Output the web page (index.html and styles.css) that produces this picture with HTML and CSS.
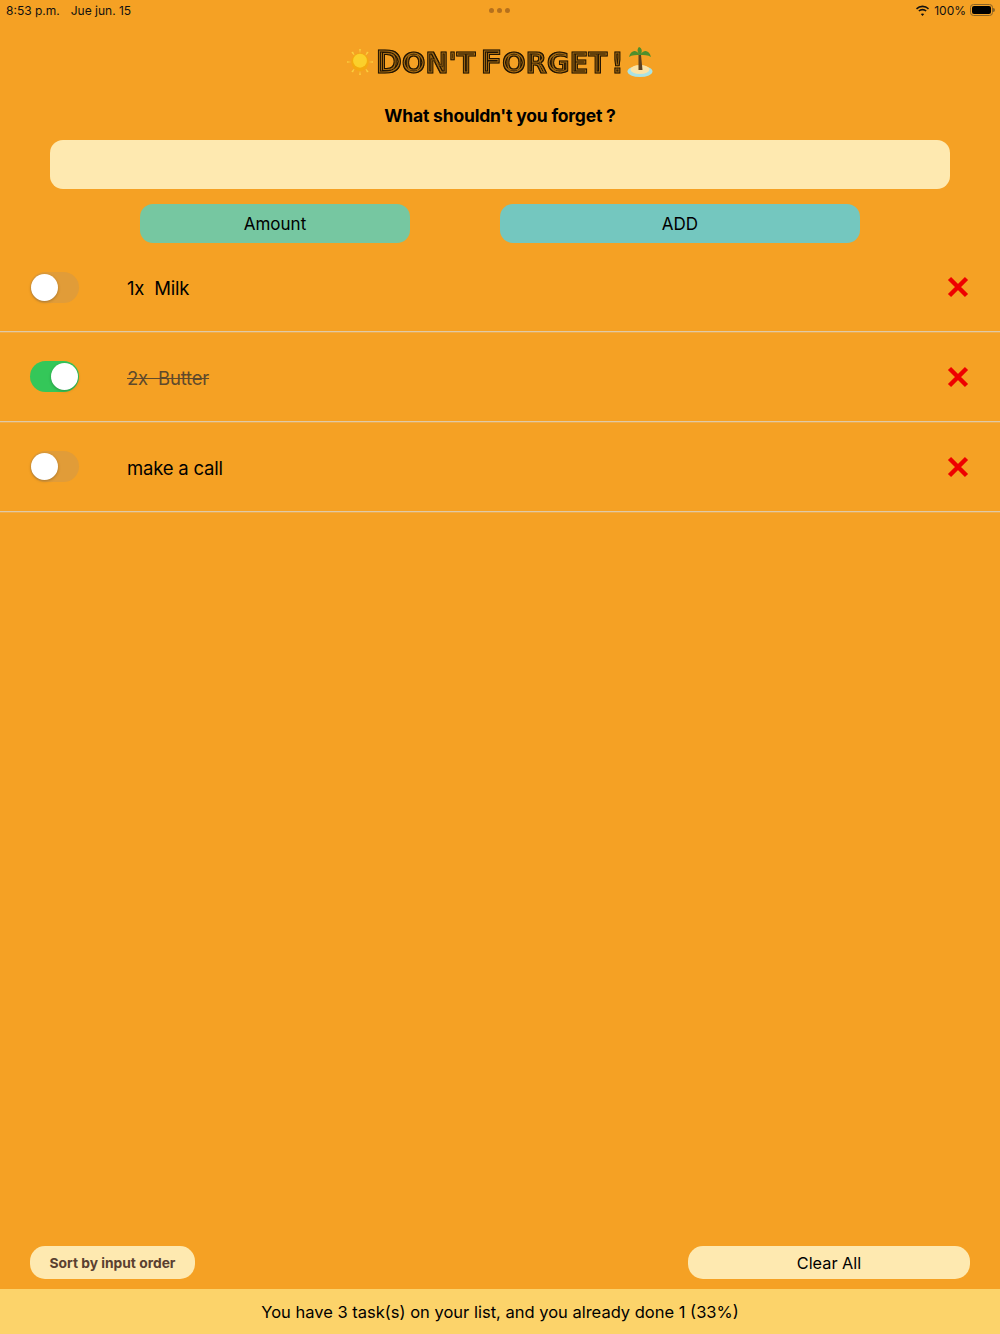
FILE: index.html
```html
<!DOCTYPE html>
<html lang="en">
<head>
<meta charset="utf-8">
<title>Don't Forget!</title>
<link rel="stylesheet" href="styles.css">
</head>
<body>
<svg class="defs" width="0" height="0" aria-hidden="true">
  <filter id="lines" x="-5%" y="-5%" width="110%" height="110%" color-interpolation-filters="sRGB">
    <feMorphology in="SourceAlpha" operator="erode" radius="1" result="e1"/>
    <feMorphology in="SourceAlpha" operator="erode" radius="2" result="e2"/>
    <feMorphology in="SourceAlpha" operator="erode" radius="3" result="e3"/>
    <feMorphology in="SourceAlpha" operator="erode" radius="4" result="e4"/>
    <feComposite in="SourceAlpha" in2="e1" operator="out" result="r1"/>
    <feComposite in="e2" in2="e3" operator="out" result="r2"/>
    <feMerge result="rings"><feMergeNode in="r1"/><feMergeNode in="r2"/><feMergeNode in="e4"/></feMerge>
    <feFlood flood-color="#1f1303"/>
    <feComposite in2="rings" operator="in" result="dark"/>
    <feFlood flood-color="#a86c10"/>
    <feComposite in2="SourceAlpha" operator="in" result="base"/>
    <feMerge><feMergeNode in="base"/><feMergeNode in="dark"/></feMerge>
  </filter>
</svg>
<div class="app">
  <header class="status">
    <div class="status-left"><span>8:53 p.m.</span><span>Jue jun. 15</span></div>
    <div class="dots"><i></i><i></i><i></i></div>
    <div class="status-right">
      <svg class="wifi" width="15" height="11" viewBox="0 0 15 11"><path d="M7.5 2.2c2.1 0 4 .8 5.5 2.2l1-1.1A9.6 9.6 0 0 0 7.5.6 9.6 9.6 0 0 0 1 3.3l1 1.1a8 8 0 0 1 5.5-2.2zm0 3.2c1.2 0 2.3.4 3.1 1.2l1.1-1.1a6 6 0 0 0-8.4 0l1.1 1.1a4.500 4.500 0 0 1 3.100-1.200zm0 3.100c-.7 0-1.200.2-1.700.6l1.700 1.800 1.700-1.800c-.5-.4-1-.6-1.700-.6z" fill="#111"/></svg>
      <span>100%</span>
      <span class="battery"><span class="battery-fill"></span></span>
    </div>
  </header>

  <div class="title-row">
    <svg class="emoji" width="26" height="26" viewBox="0 0 30 30">
      <g fill="#fbd13f"><path d="M14 0h2l-1 5zM14 30h2l-1-5zM0 14v2l5-1zM30 14v2l-5-1zM5 4l2-1 2 5zM25 4l-2-1-2 5zM5 26l2 1 2-5zM25 26l-2 1-2-5z"/></g>
      <circle cx="15" cy="15" r="10" fill="#f4a90f"/><circle cx="15" cy="13.500" r="8" fill="#fbd02b"/>
    </svg>
    <h1 class="title"><span class="cap">D</span>on't<span class="cap gap">F</span>orget<span class="bang">!</span></h1>
    <svg class="emoji island" width="26" height="30" viewBox="0 0 26 30">
      <ellipse cx="13" cy="24.500" rx="12.500" ry="5.500" fill="#a9e3e4"/><ellipse cx="13" cy="22.500" rx="9.500" ry="4.500" fill="#fbe3a5"/>
      <path d="M11.500 8h2.500l1.500 15h-4z" fill="#5b4020"/>
      <path d="M13 8C9 2 4 3 2 10c3-2 7-2 11-2zM13 8c4-6 9-5 11 2-3-2-7-2-11-2zM13 8c-3-3-3-6-1-8 3 1 4 5 1 8z" fill="#4e8f2c"/>
    </svg>
  </div>

  <p class="prompt">What shouldn't you forget ?</p>
  <div class="field"></div>

  <div class="actions">
    <button class="btn btn-amount">Amount</button>
    <button class="btn btn-add">ADD</button>
  </div>

  <ul class="tasks">
    <li class="task">
      <span class="switch"><span class="knob"></span></span>
      <span class="task-text">1x&nbsp; Milk</span>
      <svg class="del" width="22" height="22" viewBox="0 0 22 22"><path d="M2.500 2.500l17 17M19.500 2.500l-17 17" stroke="#ee0000" stroke-width="4.500" fill="none"/></svg>
    </li>
    <li class="task">
      <span class="switch on"><span class="knob"></span></span>
      <span class="task-text done">2x&nbsp; Butter</span>
      <svg class="del" width="22" height="22" viewBox="0 0 22 22"><path d="M2.500 2.500l17 17M19.500 2.500l-17 17" stroke="#ee0000" stroke-width="4.500" fill="none"/></svg>
    </li>
    <li class="task">
      <span class="switch"><span class="knob"></span></span>
      <span class="task-text">make a call</span>
      <svg class="del" width="22" height="22" viewBox="0 0 22 22"><path d="M2.500 2.500l17 17M19.500 2.500l-17 17" stroke="#ee0000" stroke-width="4.500" fill="none"/></svg>
    </li>
  </ul>

  <div class="bottom">
    <button class="pill pill-sort">Sort by input order</button>
    <button class="pill pill-clear">Clear All</button>
  </div>
  <footer class="summary">You have 3 task(s) on your list, and you already done 1 (33%)</footer>
</div>
</body>
</html>
```
FILE: styles.css
```css
* { box-sizing: border-box; }
html, body { margin: 0; padding: 0; }
body { font-family: Inter, "Liberation Sans", sans-serif; color: #000; background: #f5a124; }
.defs { display: block; height: 0; }
.app { height: 1334px; display: flex; flex-direction: column; }

.status { height: 20px; flex: none; display: grid; grid-template-columns: 1fr auto 1fr; align-items: center; padding: 0 7px 0 6px; font-size: 12px; color: #111; }
.status-left { display: flex; gap: 11px; }
.dots { display: flex; gap: 3px; }
.dots i { width: 5px; height: 5px; border-radius: 50%; background: #b5701c; }
.status-right { display: flex; justify-content: flex-end; align-items: center; gap: 4px; }
.battery { width: 23px; height: 12px; border: 1px solid #8a6326; border-radius: 3.500px; padding: 1px; display: block; position: relative; }
.battery::after { content: ""; position: absolute; right: -3px; top: 3px; width: 2px; height: 4px; background: #8a6326; border-radius: 0 2px 2px 0; }
.battery-fill { display: block; height: 100%; background: #000; border-radius: 2px; }

.title-row { height: 44px; margin-top: 20px; flex: none; display: flex; justify-content: center; align-items: center; gap: 2px; }
.title { margin: 2px 0 0; font-family: "DejaVu Sans", sans-serif; font-weight: 700; font-size: 28px; text-transform: uppercase; letter-spacing: -0.300px; line-height: 40px; color: #000; -webkit-text-stroke: 1px #000; filter: url(#lines); white-space: nowrap; }
.cap { font-size: 32px; }
.gap { margin-left: 5px; }
.bang { margin-left: 4px; }
.island { margin-left: 1px; }

.prompt { margin: 20px 0 0; height: 24px; line-height: 24px; text-align: center; font-weight: 700; font-size: 17.500px; letter-spacing: -0.200px; flex: none; }
.field { margin: 12px 50px 0; height: 49px; flex: none; border-radius: 13px; background: #fee9b0; }

.actions { margin-top: 15px; padding-left: 140px; display: flex; gap: 90px; flex: none; }
.btn { height: 39px; border: 0; border-radius: 13px; font: 400 17px Inter, "Liberation Sans", sans-serif; color: #000; padding: 0; }
.btn-amount { width: 270px; background: #76c7a1; }
.btn-add { width: 360px; background: #74c7bf; }

.tasks { list-style: none; margin: 0; padding: 0; flex: none; }
.task { height: 90px; display: flex; align-items: center; padding: 0 30px; border-bottom: 1px solid #dfc9a6; box-shadow: 0 1px 0 rgba(225, 200, 160, .3); }
.task:first-child { height: 89px; }
.switch { width: 49px; height: 31px; border-radius: 16px; background: #e19c38; padding: 2px 1px; display: block; flex: none; }
.switch.on { background: #34c759; padding-left: 21px; }
.knob { display: block; width: 27px; height: 27px; border-radius: 50%; background: #fff; box-shadow: 0 1px 3px rgba(0,0,0,.25); }
.task-text { margin-left: 48px; padding-top: 2px; flex: 1; font-size: 18.500px; letter-spacing: -0.200px; }
.task-text.done { color: #5f4a2c; text-decoration: line-through; }
.del { flex: none; margin-right: 1px; }

.bottom { margin-top: auto; padding: 0 30px 10px; display: flex; justify-content: space-between; flex: none; }
.pill { height: 33px; border: 0; border-radius: 15px; background: #fee9b0; padding: 0; }
.pill-sort { width: 165px; font: 700 13.800px Inter, "Liberation Sans", sans-serif; color: #5a4030; }
.pill-clear { width: 282px; font: 400 16.300px Inter, "Liberation Sans", sans-serif; color: #000; }
.summary { height: 45px; flex: none; display: flex; align-items: center; justify-content: center; background: #fcd36a; font-size: 16.500px; }
```
